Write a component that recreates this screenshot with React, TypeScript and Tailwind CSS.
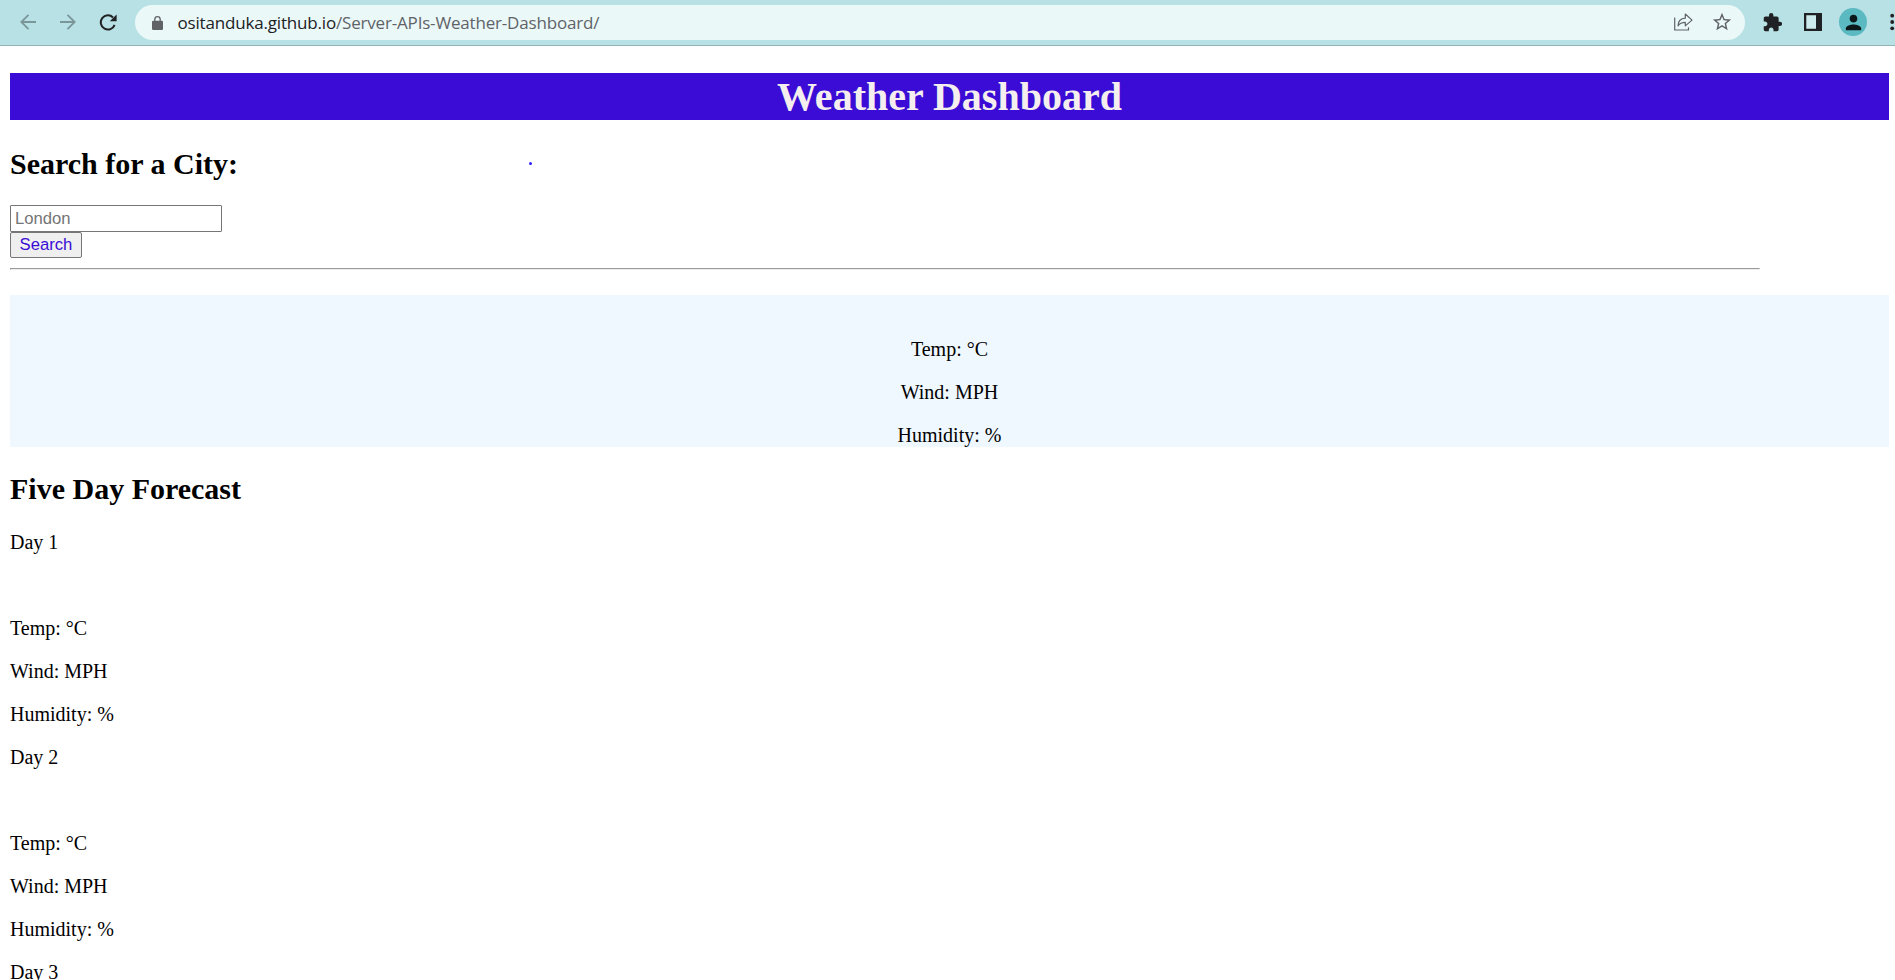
import React from "react";
import { MdExtension, MdPerson, MdStarBorder } from "react-icons/md";

function Arrow({ className }: { className: string }) {
  return (
    <svg width="16" height="16" viewBox="0 0 16 16" fill="none" stroke="currentColor" strokeWidth="1.8" className={className}>
      <path d="M16 8H1.600M8.500 0.800L1.300 8L8.500 15.200" />
    </svg>
  );
}

function Reload() {
  return (
    <svg width="18" height="17" viewBox="0 0 18 17" fill="none" className="ml-[23px] shrink-0 text-[#202124]">
      <path d="M15.600 10.800A7.100 7.100 0 1 1 14 3.500" stroke="currentColor" strokeWidth="2" />
      <path d="M17.600 0.400V7.200H10.800Z" fill="currentColor" />
    </svg>
  );
}

function Lock() {
  return (
    <svg width="11" height="14" viewBox="0 0 11 14" className="mt-px shrink-0">
      <rect y="4.700" width="11" height="9.300" rx="1.200" fill="currentColor" />
      <path d="M2.800 5.500V3.400A2.700 2.700 0 0 1 8.200 3.400V5.500" fill="none" stroke="currentColor" strokeWidth="1.300" />
    </svg>
  );
}

function Share() {
  return (
    <svg width="20" height="20" viewBox="0 0 20 20" fill="none" stroke="currentColor" strokeWidth="1.2" className="mb-px shrink-0">
      <path d="M1.700 5.500V18H15.500V15.200" />
      <path d="M5 13.800C5.200 9 7.400 6.400 12.300 6.200V2L19 8.100L12.300 13.900V10.300C8.800 10.300 6.700 11.300 5 13.800Z" strokeLinejoin="round" />
    </svg>
  );
}

function SidePanel() {
  return (
    <svg width="18" height="18" viewBox="0 0 18 18" className="shrink-0 text-[#202124]">
      <path fill="#cdebed" d="M2 2H12V16H2Z" />
      <path fill="currentColor" fillRule="evenodd" d="M0 0H18V18H0ZM2.300 2.300V15.700H12V2.300Z" />
    </svg>
  );
}

function Toolbar() {
  return (
    <header className="flex h-[46px] items-start border-b border-[#93b3b8] bg-[#b7e1e4] font-['Open_Sans',sans-serif]">
      <div className="flex h-[44px] w-[135px] shrink-0 items-center pl-[19.5px] text-[#7b9699]">
        <Arrow className="shrink-0" />
        <Arrow className="ml-[24px] shrink-0 rotate-180" />
        <Reload />
      </div>
      <div className="mt-[5px] flex h-[35px] w-[1610px] shrink-0 items-center rounded-full bg-[#ebf8f8] pl-[17px] text-[#5f6368]">
        <Lock />
        <div className="ml-[14.500px] flex-1 text-[17px] leading-[24px] tracking-[-0.18px] whitespace-nowrap">
          <span className="text-[#202124]">ositanduka.github.io</span>
          <span>/Server-APIs-Weather-Dashboard/</span>
        </div>
        <Share />
        <MdStarBorder className="mr-[12px] mb-px ml-[18px] size-[22px] shrink-0" />
      </div>
      <div className="flex h-[44px] flex-1 items-center overflow-hidden pl-[17px] text-[#202124]">
        <MdExtension className="size-[21px] shrink-0" />
        <div className="ml-[20.500px] flex shrink-0">
          <SidePanel />
        </div>
        <div className="ml-[17.500px] flex size-[28px] shrink-0 items-center justify-center rounded-full bg-[#5ab9c1]">
          <MdPerson className="size-[23px] text-[#0b1718]" />
        </div>
        <svg width="6" height="18" viewBox="0 0 6 18" fill="currentColor" className="ml-[22px] shrink-0">
          <circle cx="3.200" cy="2.700" r="1.900" />
          <circle cx="3.200" cy="9" r="1.900" />
          <circle cx="3.200" cy="15.300" r="1.900" />
        </svg>
      </div>
    </header>
  );
}

function Readings() {
  return (
    <>
      <p>Temp: °C</p>
      <p>Wind: MPH</p>
      <p>Humidity: %</p>
    </>
  );
}

export default function App() {
  return (
    <div className="h-[980px] w-[1895px] overflow-hidden bg-white">
      <Toolbar />
      <main className="mt-[27px] mr-[6px] ml-[10px] font-['Liberation_Serif',serif] text-[20px] leading-[23px] text-black">
        <h1 className="h-[47px] bg-[#3a0cd5] text-center text-[40px] leading-[47px] font-bold text-[#f5eeee]">
          Weather Dashboard
        </h1>
        <div className="relative mt-[27px]">
          <h2 className="text-[30px] leading-[34px] font-bold">Search for a City:</h2>
          <span className="absolute top-[15px] left-[519px] size-[3px] rounded-full bg-[#3020ff]" />
        </div>
        <form className="mt-[24px] flex flex-col items-start font-['Liberation_Sans',sans-serif] text-[16.667px]">
          <input
            placeholder="London"
            className="h-[27px] w-[212px] rounded-[1px] border border-[#767676] bg-white px-[4px] leading-[19px] placeholder:text-[#757575]"
          />
          <button
            type="button"
            className="h-[26px] w-[72px] rounded-[2px] border border-[#767676] bg-[#efefef] leading-[22px] text-[#3a0cd5]"
          >
            Search
          </button>
        </form>
        <hr className="mt-[10px] h-[2px] w-[1750px] border border-t-[#9a9a9a] border-r-[#eeeeee] border-b-[#eeeeee] border-l-[#9a9a9a]" />
        <section className="mt-[25px] flex h-[152px] flex-col gap-[20px] bg-[#f0f8ff] pt-[43px] text-center">
          <Readings />
        </section>
        <h2 className="mt-[25px] text-[30px] leading-[34px] font-bold">Five Day Forecast</h2>
        <div className="mt-[25px] flex flex-col gap-[20px]">
          {[1, 2, 3].map((day) => (
            <section key={day} className="flex flex-col gap-[20px]">
              <p>Day {day}</p>
              <div className="h-[23px]" />
              <Readings />
            </section>
          ))}
        </div>
      </main>
    </div>
  );
}
